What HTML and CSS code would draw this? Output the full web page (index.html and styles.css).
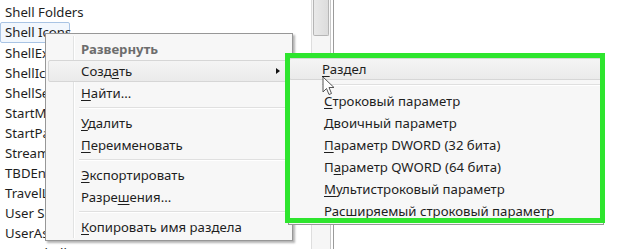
FILE: index.html
```html
<!DOCTYPE html>
<html lang="ru">
<head>
    <meta charset="UTF-8">
    <title>Редактор реестра</title>
    <link rel="stylesheet" href="styles.css">
</head>
<body>

    <div class="window">
        <div class="tree">
            <div class="row">Shell Folders</div>
            <div class="row selected">Shell Icons</div>
            <div class="row">ShellExecuteHooks</div>
            <div class="row">ShellIconOverlay</div>
            <div class="row">ShellServiceObjects</div>
            <div class="row">StartMenu</div>
            <div class="row">StartPage</div>
            <div class="row">StreamMRU</div>
            <div class="row">TBDEn</div>
            <div class="row">TravelLog</div>
            <div class="row">User Shell Folders</div>
            <div class="row">UserAssist</div>
            <div class="row">User Shell</div>
        </div>
        <div class="scrollbar">
            <div class="thumb"></div>
        </div>
        <div class="pane"></div>
    </div>

    <!-- context menu -->
    <div class="menu">
        <div class="item default">Развернуть</div>
        <div class="item hover">Созд<u>а</u>ть <span class="arrow"></span></div>
        <div class="item"><u>Н</u>айти...</div>
        <div class="sep"></div>
        <div class="item"><u>У</u>далить</div>
        <div class="item"><u>П</u>ереименовать</div>
        <div class="sep"></div>
        <div class="item"><u>Э</u>кспортировать</div>
        <div class="item">Разре<u>ш</u>ения...</div>
        <div class="sep"></div>
        <div class="item"><u>К</u>опировать имя раздела</div>
    </div>

    <!-- submenu "Создать" -->
    <div class="submenu">
        <div class="item hover"><u>Р</u>аздел</div>
        <div class="sep"></div>
        <div class="item"><u>С</u>троковый параметр</div>
        <div class="item">Двоичный параметр</div>
        <div class="item"><u>П</u>араметр DWORD (32 бита)</div>
        <div class="item">П<u>а</u>раметр QWORD (64 бита)</div>
        <div class="item"><u>М</u>ультистроковый параметр</div>
        <div class="item">Рас<u>ш</u>иряемый строковый параметр</div>
    </div>

    <div class="frame"></div>

    <svg class="cursor" width="13" height="21" viewBox="0 0 13 21">
        <path d="M1 1 L1 16 L4.5 12.5 L7 18.5 L9.5 17.5 L7 11.5 L12 11.5 Z" fill="#fff" stroke="#555" stroke-width="1" stroke-linejoin="round"/>
    </svg>

</body>
</html>
```

FILE: styles.css
```css
body {
    margin: 0;
    padding: 0;
    background-color: #fff;
    font-family: 'Noto Sans', 'Open Sans', sans-serif;
    font-size: 13.2px;
    color: #1e1e1e;
    width: 624px;
    height: 249px;
    overflow: hidden;
}

u {
    text-decoration: underline;
    text-underline-offset: 2px;
}

.window {
    display: flex;
    height: 249px;
    overflow: hidden;
}

.tree {
    width: 311px;
    padding-top: 2px;
    overflow: hidden;
}

.row {
    height: 20px;
    line-height: 20px;
    padding-left: 5px;
    white-space: nowrap;
}

.row.selected {
    width: 64px;
    padding-left: 4px;
    border: 1px solid #a9c4e4;
    border-radius: 2px;
    background-color: #f2f7fd;
    height: 19px;
    line-height: 19px;
}

.scrollbar {
    width: 18px;
    border-left: 1px solid #dedede;
    border-right: 1px solid #c8c8c8;
    background-color: #f6f6f6;
}

.thumb {
    height: 35px;
    margin: 0 1px;
    border: 1px solid #b5b5b5;
    border-top: none;
    border-radius: 0 0 2px 2px;
    background: linear-gradient(to right, #e9e9e9, #dcdcdc);
}

.pane {
    flex: 1;
    border-left: 1px solid #9a9a9a;
    margin-left: 2px;
}

.menu {
    position: absolute;
    left: 45px;
    top: 33px;
    width: 246px;
    padding: 4px 0 2px;
    background-color: #f7f7f7;
    border: 1px solid #979797;
    box-shadow: 2px 2px 2px rgba(0, 0, 0, 0.3);
}

.menu::before {
    content: "";
    position: absolute;
    left: 27px;
    top: 2px;
    bottom: 2px;
    width: 1px;
    background-color: #e2e3e3;
    border-right: 1px solid #fff;
}

.item {
    position: relative;
    height: 22px;
    line-height: 22px;
    padding-left: 33px;
    margin: 0 2px;
    white-space: nowrap;
}

.item.default {
    font-weight: bold;
    color: #6d6d6d;
}

.item.hover {
    background: linear-gradient(#f4f4f4, #eaeaea);
    border: 1px solid #d6d6d6;
    border-radius: 2px;
    height: 20px;
    line-height: 20px;
    padding-left: 32px;
}

.arrow {
    position: absolute;
    right: 9px;
    top: 7px;
    width: 0;
    height: 0;
    border-top: 3px solid transparent;
    border-bottom: 3px solid transparent;
    border-left: 4px solid #111;
}

.sep {
    height: 1px;
    margin: 3px 2px 3px 33px;
    background-color: #e0e0e0;
    border-bottom: 1px solid #fff;
}

.submenu {
    position: absolute;
    left: 288px;
    top: 57px;
    width: 314px;
    height: 166px;
    background-color: #f7f7f7;
    border: 1px solid #979797;
}

.submenu .item.hover {
    margin: 0;
}

.submenu .sep {
    margin: 4px 2px 4px 33px;
}

.frame {
    position: absolute;
    left: 285px;
    top: 53px;
    width: 310px;
    height: 160px;
    border: 5px solid #2ee52e;
}

.cursor {
    position: absolute;
    left: 322px;
    top: 76px;
}
```
